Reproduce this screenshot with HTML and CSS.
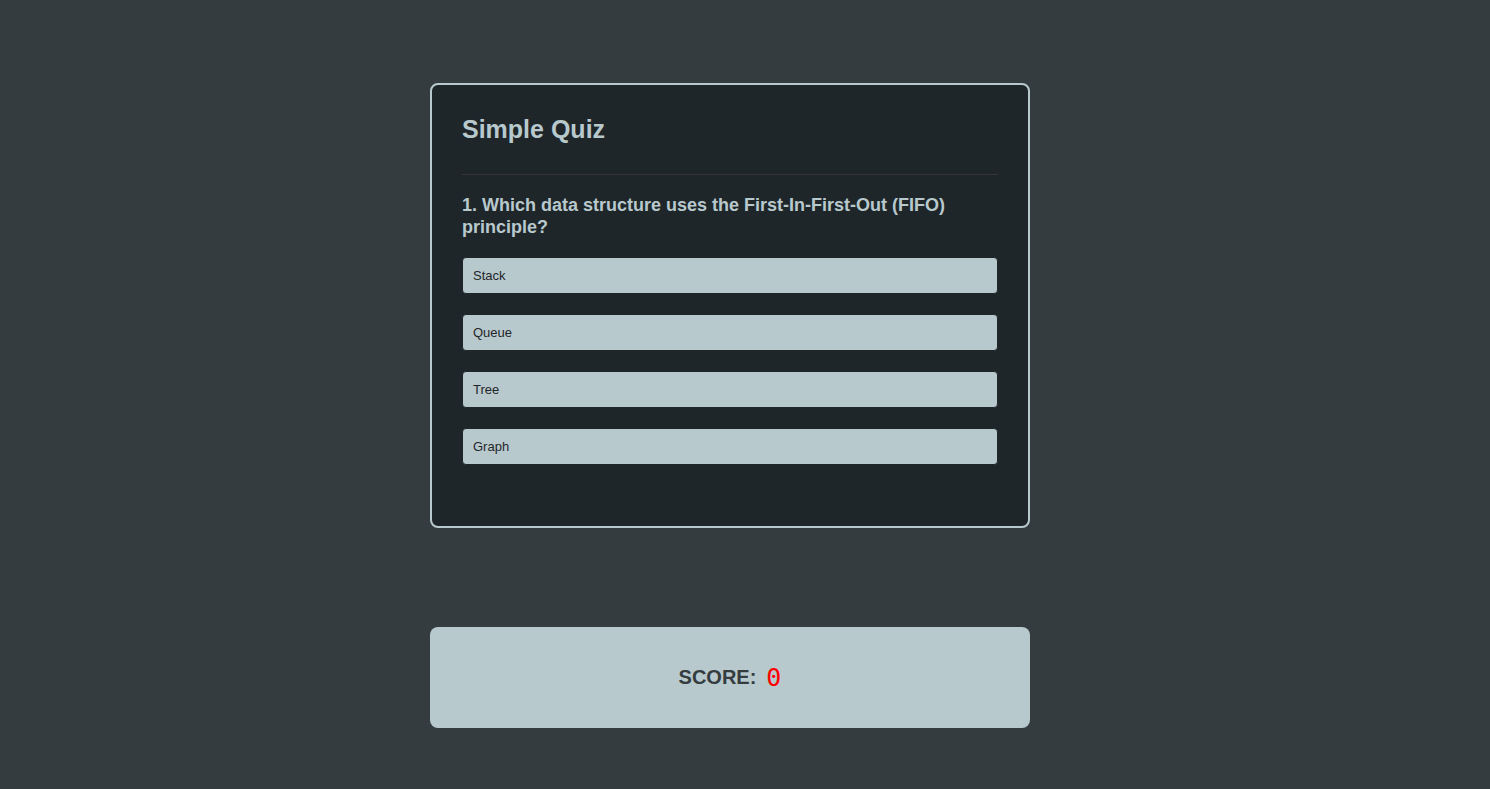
FILE: index.html
```html
<!DOCTYPE html>
<html>
<head>
<meta charset="utf-8">
<link rel="stylesheet" href="styles.css">
</head>
<body>
<main class="page">
  <section class="quiz">
    <h2 class="quiz-title">Simple Quiz</h2>
    <hr class="divider">
    <h3 class="question">1. Which data structure uses the First-In-First-Out (FIFO) principle?</h3>
    <div class="options">
      <button class="option">Stack</button>
      <button class="option">Queue</button>
      <button class="option">Tree</button>
      <button class="option">Graph</button>
    </div>
  </section>
  <section class="score">
    <span class="score-label">SCORE:</span>
    <span class="score-value">0</span>
  </section>
</main>
</body>
</html>
```
FILE: styles.css
```css
html, body {
  margin: 0;
  padding: 0;
}
body {
  background: #353c3f;
  font-family: "Liberation Sans", Arial, sans-serif;
  min-height: 789px;
}
.page {
  display: flex;
  flex-direction: column;
  align-items: center;
  padding-top: 83px;
  padding-right: 30px;
}
.quiz {
  box-sizing: border-box;
  width: 600px;
  background: #1f2629;
  border: 2px solid #b8c9cd;
  border-radius: 8px;
  padding: 30px 30px 61px;
}
.quiz-title {
  margin: 0;
  color: #b8c9cd;
  font-size: 25px;
  font-weight: bold;
  line-height: 28px;
}
.divider {
  border: none;
  border-top: 1px solid #363535;
  margin: 31px 0 19px;
}
.question {
  margin: 0 0 19px;
  color: #b8c9cd;
  font-size: 18px;
  font-weight: bold;
  line-height: 22px;
}
.options {
  display: flex;
  flex-direction: column;
  gap: 20px;
}
.option {
  box-sizing: border-box;
  width: 100%;
  height: 37px;
  text-align: left;
  padding: 0 10px;
  background: #b8c9cd;
  color: #1f2629;
  border: 1px solid #1f2629;
  border-radius: 4px;
  font-family: "Liberation Sans", Arial, sans-serif;
  font-size: 13px;
  cursor: pointer;
}
.score {
  box-sizing: border-box;
  width: 600px;
  height: 101px;
  margin-top: 99px;
  background: #b8c9cd;
  border-radius: 8px;
  display: flex;
  align-items: center;
  justify-content: center;
  gap: 10px;
}
.score-label {
  color: #353c3f;
  font-size: 20px;
  font-weight: bold;
}
.score-value {
  color: #ff0000;
  font-family: "DejaVu Sans Mono", monospace;
  font-size: 25px;
  font-weight: 300;
}
```
